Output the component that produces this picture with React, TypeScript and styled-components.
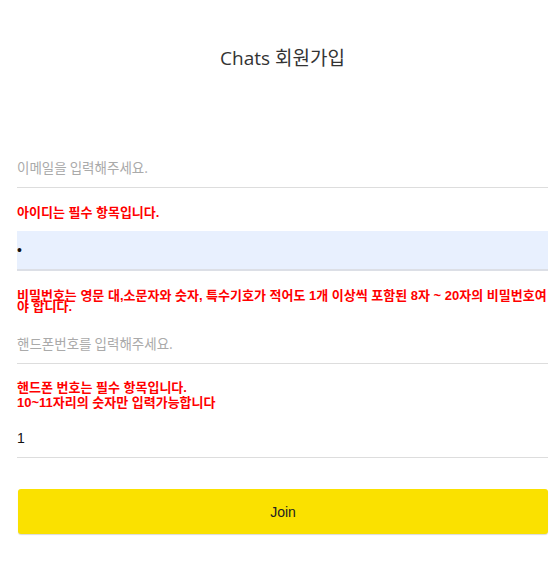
import React from "react"
import styled, { createGlobalStyle } from "styled-components"

const GlobalStyle = createGlobalStyle`
  html, body {
    margin: 0;
    padding: 0;
    background: #ffffff;
  }
  * {
    box-sizing: border-box;
  }
`

const Page = styled.div`
  width: 558px;
  min-height: 570px;
  padding: 0 10px 0 17px;
  display: flex;
  flex-direction: column;
`

const Title = styled.h1`
  margin: 44px 0 0;
  height: 28px;
  text-align: center;
  font-family: "Open Sans", "Noto Sans CJK KR", sans-serif;
  font-weight: 400;
  font-size: 19px;
  line-height: 28px;
  color: #333333;
`

const Form = styled.form`
  display: flex;
  flex-direction: column;
  margin-top: 76px;
`

const Input = styled.input<{ $filled?: boolean }>`
  width: 100%;
  height: 40px;
  padding: 0;
  border: none;
  border-bottom: ${(p) => (p.$filled ? "2px solid #dcdfe6" : "1px solid #dddddd")};
  background: ${(p) => (p.$filled ? "#e8f0fe" : "transparent")};
  outline: none;
  font-family: "Liberation Sans", "Noto Sans CJK KR", sans-serif;
  font-size: 14px;
  color: #111111;
  &::placeholder {
    font-family: "Noto Sans CJK KR", sans-serif;
    font-size: 13.5px;
    color: #aaaaaa;
  }
`

const ErrorText = styled.p<{ $lh?: number; $top?: number; $bottom?: number }>`
  margin: 0;
  padding: ${(p) => p.$top ?? 18}px 0 ${(p) => p.$bottom ?? 12}px;
  font-family: "Liberation Sans", "Noto Sans CJK KR", sans-serif;
  font-weight: 700;
  font-size: 13px;
  line-height: ${(p) => p.$lh || 13}px;
  color: #ff0000;
`

const JoinButton = styled.button`
  margin-top: 31px;
  margin-left: 1px;
  width: 530px;
  height: 45px;
  border: none;
  border-radius: 3px;
  background: #fae100;
  box-shadow: 0 1px 1px rgba(0, 0, 0, 0.15);
  font-family: "Liberation Sans", sans-serif;
  font-size: 14px;
  color: #222222;
  cursor: pointer;
`

export default function App() {
  return (
    <>
      <GlobalStyle />
      <Page>
        <Title>Chats 회원가입</Title>
        <Form onSubmit={(e) => e.preventDefault()}>
          <Input type="email" placeholder="이메일을 입력해주세요." />
          <ErrorText>아이디는 필수 항목입니다.</ErrorText>
          <Input $filled type="password" defaultValue="1" />
          <ErrorText $lh={11} $top={19}>
            비밀번호는 영문 대,소문자와 숫자, 특수기호가 적어도 1개 이상씩 포함된 8자 ~ 20자의 비밀번호여야 합니다.
          </ErrorText>
          <Input type="tel" placeholder="핸드폰번호를 입력해주세요." />
          <ErrorText $lh={15} $top={16} $bottom={8}>
            핸드폰 번호는 필수 항목입니다.
            <br />
            10~11자리의 숫자만 입력가능합니다
          </ErrorText>
          <Input type="text" defaultValue="1" />
          <JoinButton type="submit">Join</JoinButton>
        </Form>
      </Page>
    </>
  )
}
